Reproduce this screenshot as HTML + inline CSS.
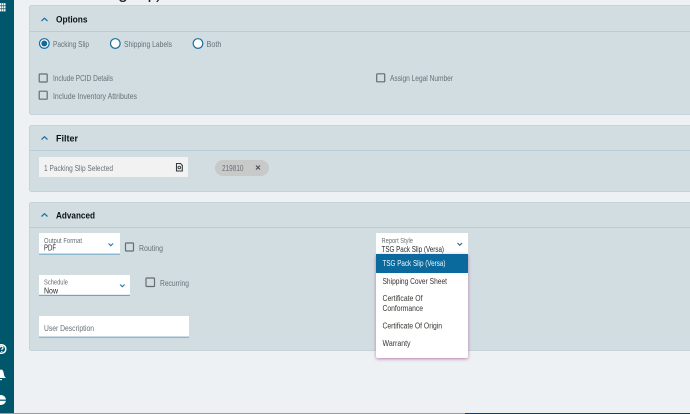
<!DOCTYPE html>
<html><head><meta charset="utf-8"><style>
html,body{margin:0;padding:0;width:690px;height:414px;overflow:hidden;background:#edf1f4}
svg{display:block}
text{font-family:"Liberation Sans",sans-serif;font-size:8px;fill:#667177}
.h{font-size:9.5px;font-weight:bold;fill:#0b1114}
.d{fill:#23292d}
.s{font-size:7px;fill:#666f74}
.m{fill:#37342e}
</style></head><body>
<svg width="690" height="414" viewBox="0 0 690 414" xmlns="http://www.w3.org/2000/svg">
<defs><filter id="sh" x="-20%" y="-20%" width="140%" height="140%"><feDropShadow dx="0" dy="1" stdDeviation="1.500" flood-color="#a8488f" flood-opacity=".7"/></filter></defs>
<rect width="690" height="414" fill="#edf1f4"/>
<rect x="0" y="413" width="690" height="1" fill="#9a9a9a"/>
<rect x="465" y="413" width="225" height="1" fill="#123a66"/>
<rect width="14" height="413" fill="#00566b"/>
<g fill="#fff"><rect x="0" y="3.200" width="1.500" height="2.200"/><rect x="2" y="3.200" width="1.500" height="2.200"/><rect x="4" y="3.200" width="1.500" height="2.200"/>
<rect x="0" y="6.200" width="1.500" height="2.200"/><rect x="2" y="6.200" width="1.500" height="2.200"/><rect x="4" y="6.200" width="1.500" height="2.200"/>
<rect x="0" y="9.200" width="1.500" height="2.200"/><rect x="2" y="9.200" width="1.500" height="2.200"/><rect x="4" y="9.200" width="1.500" height="2.200"/></g>
<circle cx="1.500" cy="349" r="4.300" fill="none" stroke="#fff" stroke-width="1.500"/>
<path d="M.2 347.500a1.400 1.400 0 1 1 1.700 1.500v1M1.800 351v1" fill="none" stroke="#fff" stroke-width="1.100"/>
<path d="M-3 378c1.500-1 1.500-2.500 1.700-4.500c.3-2.500 1.300-4 2.500-4s2.300 1.500 2.600 4c.2 2 .7 3.500 2.200 4.500z" fill="#fff"/>
<rect x="-1" y="379" width="3" height="1.200" fill="#fff"/>
<circle cx="1" cy="400" r="5" fill="#fff"/><rect x="-4" y="399.600" width="10" height="1.200" fill="#00566b"/>
<text x="118" y="-2" style="font-size:18px;fill:#222">g</text><text x="147.500" y="-2" style="font-size:18px;fill:#222">p</text><text x="156" y="-2" style="font-size:18px;fill:#222">)</text>

<g fill="#d1dde1" stroke="#c4d3d8" stroke-width="1">
<rect x="29.500" y="5.500" width="670" height="109" rx="2"/>
<rect x="29.500" y="125.500" width="670" height="66" rx="2"/>
<rect x="29.500" y="202.500" width="670" height="148" rx="2"/>
</g>
<g fill="#b7ced9"><rect x="30" y="31" width="660" height="1"/><rect x="30" y="150" width="660" height="1"/><rect x="30" y="227" width="660" height="1"/></g>
<g fill="none" stroke="#1f6f9e" stroke-width="1.200"><path d="M41.500 21l3-2.800l3 2.800"/><path d="M41.500 139.500l3-2.800l3 2.800"/><path d="M41.500 216.500l3-2.800l3 2.800"/></g>
<text class="h" x="56" y="22.500" textLength="31.500" lengthAdjust="spacingAndGlyphs">Options</text>
<text class="h" x="56" y="141.500" textLength="22" lengthAdjust="spacingAndGlyphs">Filter</text>
<text class="h" x="56" y="218.500" textLength="39" lengthAdjust="spacingAndGlyphs">Advanced</text>

<circle cx="44.300" cy="43.500" r="4.800" fill="#fff" stroke="#1b6f9f" stroke-width="1.200"/><circle cx="44.300" cy="43.500" r="3" fill="#126a9b"/>
<circle cx="115.300" cy="43.500" r="4.800" fill="#fff" stroke="#1b6f9f" stroke-width="1.200"/>
<circle cx="198" cy="43.500" r="4.800" fill="#fff" stroke="#1b6f9f" stroke-width="1.200"/>
<text x="53" y="47" textLength="36" lengthAdjust="spacingAndGlyphs">Packing Slip</text>
<text x="124" y="47" textLength="48" lengthAdjust="spacingAndGlyphs">Shipping Labels</text>
<text x="206.500" y="47" textLength="15" lengthAdjust="spacingAndGlyphs">Both</text>

<g fill="#d1dde1" stroke="#676d70" stroke-width="1.200">
<rect x="39.200" y="74" width="8" height="8" rx=".7"/>
<rect x="39.200" y="91.200" width="8" height="8" rx=".7"/>
<rect x="376.700" y="73.800" width="8" height="8" rx=".7"/>
<rect x="125.500" y="243" width="8" height="8" rx=".7"/>
<rect x="146" y="278" width="8.500" height="8.500" rx=".7"/>
</g>
<text x="53" y="81" textLength="60" lengthAdjust="spacingAndGlyphs">Include PCID Details</text>
<text x="53" y="99" textLength="84" lengthAdjust="spacingAndGlyphs">Include Inventory Attributes</text>
<text x="390" y="81" textLength="63" lengthAdjust="spacingAndGlyphs">Assign Legal Number</text>

<rect x="39" y="157" width="149" height="20" fill="#f2f2f2"/>
<text x="44" y="171" textLength="69" lengthAdjust="spacingAndGlyphs">1 Packing Slip Selected</text>
<path d="M176.500 163.500h4l1.800 1.800v5.700h-5.800z" fill="none" stroke="#33393c" stroke-width="1.100"/><circle cx="179.300" cy="167.500" r="1.300" fill="none" stroke="#33393c" stroke-width=".9"/>
<rect x="215" y="160" width="54" height="16" rx="8" fill="#c8c9c9"/>
<text x="222" y="171" textLength="21.500" lengthAdjust="spacingAndGlyphs">219810</text>
<path d="M256 165.500l4 4m0-4l-4 4" stroke="#4a4f52" stroke-width="1.100" fill="none"/>

<rect x="39" y="233" width="81" height="22" fill="#fff"/><rect x="39" y="253.500" width="81" height="1.500" fill="#8fb9d0"/>
<text class="s" x="44" y="243" textLength="38" lengthAdjust="spacingAndGlyphs">Output Format</text>
<text class="d" x="44" y="250.500" textLength="12" lengthAdjust="spacingAndGlyphs">PDF</text>
<path d="M108.500 243.500l2.300 2.200l2.300-2.200" fill="none" stroke="#2a78a8" stroke-width="1.100"/>
<text x="139" y="251" textLength="24" lengthAdjust="spacingAndGlyphs">Routing</text>

<rect x="39" y="275" width="91" height="21" fill="#fff"/><rect x="39" y="294.800" width="91" height="1.200" fill="#6fa8c6"/>
<text class="s" x="44" y="284.500" textLength="24" lengthAdjust="spacingAndGlyphs">Schedule</text>
<text class="d" x="44" y="293.500" textLength="14" lengthAdjust="spacingAndGlyphs">Now</text>
<path d="M120 284.500l2.300 2.200l2.300-2.200" fill="none" stroke="#2a78a8" stroke-width="1.100"/>
<text x="160" y="286" textLength="29" lengthAdjust="spacingAndGlyphs">Recurring</text>

<rect x="39" y="316" width="150" height="22" fill="#fff"/><rect x="39" y="336.500" width="150" height="1.500" fill="#8fb9d0"/>
<text x="44" y="331" textLength="50" lengthAdjust="spacingAndGlyphs">User Description</text>

<rect x="376" y="233" width="92" height="22" fill="#fff"/>
<text class="s" x="381.500" y="243" textLength="31.500" lengthAdjust="spacingAndGlyphs">Report Style</text>
<text class="d" x="381.500" y="252" textLength="62.500" lengthAdjust="spacingAndGlyphs">TSG Pack Slip (Versa)</text>
<path d="M457.500 243l2.300 2.200l2.300-2.200" fill="none" stroke="#2a6a98" stroke-width="1.100"/>

<rect x="376" y="254" width="92" height="104" rx="2" fill="#fff" filter="url(#sh)"/>
<rect x="376" y="254" width="92" height="19" fill="#0a6a9e"/>
<text x="382.500" y="266" textLength="63" lengthAdjust="spacingAndGlyphs" style="fill:#f2f6f8">TSG Pack Slip (Versa)</text>
<text class="m" x="382.500" y="284" textLength="64.500" lengthAdjust="spacingAndGlyphs">Shipping Cover Sheet</text>
<text class="m" x="382.500" y="301" textLength="40" lengthAdjust="spacingAndGlyphs">Certificate Of</text>
<text class="m" x="382.500" y="311" textLength="40.500" lengthAdjust="spacingAndGlyphs">Conformance</text>
<text class="m" x="382.500" y="328.500" textLength="59.500" lengthAdjust="spacingAndGlyphs">Certificate Of Origin</text>
<text class="m" x="382.500" y="346" textLength="28" lengthAdjust="spacingAndGlyphs">Warranty</text>
</svg>
</body></html>
